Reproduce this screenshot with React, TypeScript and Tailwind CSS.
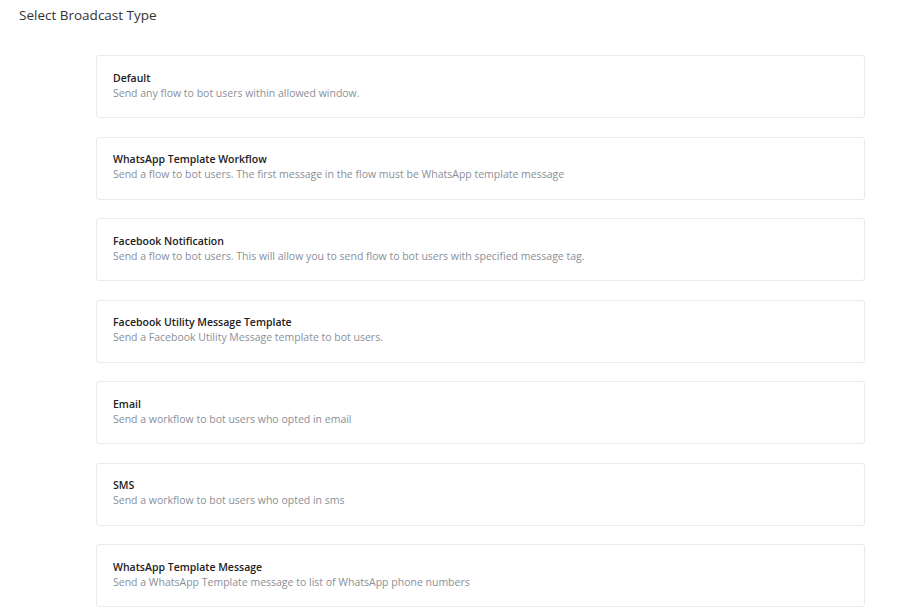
const broadcastTypes = [
  { title: 'Default', description: 'Send any flow to bot users within allowed window.' },
  {
    title: 'WhatsApp Template Workflow',
    description: 'Send a flow to bot users. The first message in the flow must be WhatsApp template message',
  },
  {
    title: 'Facebook Notification',
    description: 'Send a flow to bot users. This will allow you to send flow to bot users with specified message tag.',
  },
  { title: 'Facebook Utility Message Template', description: 'Send a Facebook Utility Message template to bot users.' },
  { title: 'Email', description: 'Send a workflow to bot users who opted in email' },
  { title: 'SMS', description: 'Send a workflow to bot users who opted in sms' },
  {
    title: 'WhatsApp Template Message',
    description: 'Send a WhatsApp Template message to list of WhatsApp phone numbers',
  },
];

export default function App() {
  return (
    <div className="min-h-screen bg-white font-['Open_Sans',sans-serif]">
      <p className="pl-[19px] pt-[5px] text-[13.5px] leading-[20px] text-[#333]">Select Broadcast Type</p>
      <div className="flex flex-col gap-[18.5px] pl-[96px] pr-[47px] pt-[30px]">
        {broadcastTypes.map((item) => (
          <div
            key={item.title}
            className="h-[63px] rounded-[3px] border border-[#e9e9f2] bg-white px-[16px] pt-[14.5px] cursor-pointer"
          >
            <p className="text-[10.5px] font-semibold leading-[15px] text-[#222]">{item.title}</p>
            <p className="text-[10.5px] leading-[15px] text-[#8a8f99]">{item.description}</p>
          </div>
        ))}
      </div>
    </div>
  );
}
